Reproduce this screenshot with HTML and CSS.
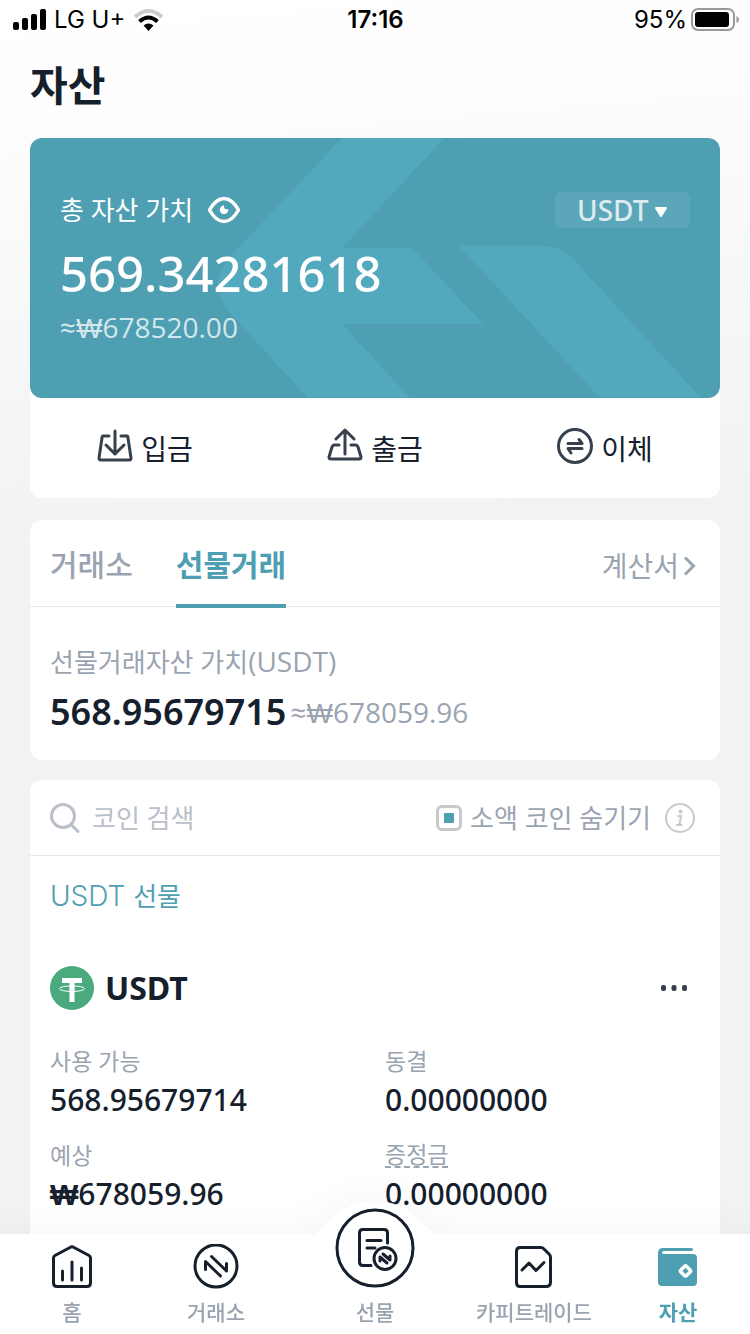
FILE: index.html
```html
<!DOCTYPE html>
<html lang="ko">
<head>
<meta charset="utf-8">
<meta name="viewport" content="width=device-width, initial-scale=1">
<title>자산</title>
<link rel="stylesheet" href="styles.css">
</head>
<body>
<div class="app">
  <div class="status">
    <div class="status-side">
      <svg width="34" height="22" viewBox="0 0 34 22" aria-hidden="true"><rect x="1" y="13" width="6" height="8" rx="2"/><rect x="10" y="9" width="6" height="12" rx="2"/><rect x="19" y="5" width="6" height="16" rx="2"/><rect x="28" y="0" width="6" height="21" rx="2"/></svg>
      <span class="carrier">LG U+</span>
      <svg width="30" height="22" viewBox="0 0 30 22" fill="none" aria-hidden="true"><path d="M2 8Q15.500-4 29 8" stroke="#ccc" stroke-width="4"/><path d="M6.500 12.500Q15.500 4.500 24.500 12.500" stroke="#000" stroke-width="4"/><path d="M10.500 16.500Q15.500 12.500 20.500 16.500L15.500 22Z" fill="#000"/></svg>
    </div>
    <span class="clock">17:16</span>
    <div class="status-side status-right">
      <span>95%</span>
      <svg width="48" height="24" viewBox="0 0 48 24" aria-hidden="true"><rect x="1" y="1" width="42" height="21" rx="6" fill="none" stroke="#999" stroke-width="2"/><rect x="4" y="4" width="34" height="15" rx="3"/><path d="M45.500 8Q48 9 48 11.500T45.500 15Z" fill="#999"/></svg>
    </div>
  </div>

  <main class="main">
    <h1 class="title">자산</h1>

    <section class="panel">
      <div class="hero">
        <svg class="hero-art" viewBox="0 0 690 260" preserveAspectRatio="xMidYMid slice" fill="#52a9bd" aria-hidden="true"><path d="M312 0H414L312 110H382L453 186H312L380 260H278L200 175Q176 146 200 119Z"/><path d="M429 108H515Q530 108 542 120L671 260H570Z"/></svg>
        <div class="hero-top">
          <button class="reveal" type="button">총 자산 가치
            <svg width="34" height="28" viewBox="0 0 34 28" aria-hidden="true"><path d="M2.500 14Q9 2.500 17 2.500T31.500 14Q25 25.500 17 25.500T2.500 14Z" fill="none" stroke="#fff" stroke-width="3.500" stroke-linejoin="round"/><path d="M17 9.500A4.300 4.300 0 1 0 21.300 13Q17 14.500 17 9.500Z" fill="#fff"/></svg>
          </button>
          <div class="currency">
            <select class="currency-select" aria-label="통화"><option>USDT</option></select>
            <svg class="currency-arrow" width="14" height="11" viewBox="0 0 14 11" aria-hidden="true"><path d="M2 1H12L7 9Z" fill="#fff" stroke="#fff" stroke-width="2" stroke-linejoin="round"/></svg>
          </div>
        </div>
        <div class="hero-total">569.34281618</div>
        <div class="hero-krw">≈<span class="won">₩</span>678520.00</div>
      </div>
      <div class="actions">
        <button class="action" type="button"><svg width="36" height="36" viewBox="0 0 36 36" aria-hidden="true"><path d="M12 8H6Q5 8 5 10L2 30Q2 32 4 32H32Q34 32 34 30L31 10Q31 8 30 8H24M18 3V26M9 17L18 26L27 17"/></svg>입금</button>
        <button class="action" type="button"><svg width="36" height="36" viewBox="0 0 36 36" aria-hidden="true"><path d="M12 17H7Q6 17 5 19L2 29Q2 31 4 31H32Q34 31 34 29L31 19Q30 17 29 17H24M18 26V2M9 11L18 2L27 11"/></svg>출금</button>
        <button class="action" type="button"><svg width="36" height="36" viewBox="0 0 36 36" aria-hidden="true"><circle cx="18" cy="18" r="16.500"/><path d="M11 15.500H25L22 11.500M25 20.500H11L14 25"/></svg>이체</button>
      </div>
    </section>

    <section class="panel">
      <div class="tabs">
        <button class="tab" type="button">거래소</button>
        <button class="tab tab-active" type="button">선물거래</button>
        <a class="bill" href="#">계산서<svg width="13" height="22" viewBox="0 0 13 22" aria-hidden="true"><path d="M2 2.500L10.500 11L2 19.500" fill="none" stroke="currentColor" stroke-width="3"/></svg></a>
      </div>
      <div class="summary">
        <div class="summary-label">선물거래자산 가치<span class="latin">(USDT)</span></div>
        <div class="summary-row"><strong class="summary-value">568.95679715</strong><span class="latin">≈<span class="won">₩</span>678059.96</span></div>
      </div>
    </section>

    <section class="panel">
      <div class="filter">
        <label class="search">
          <svg width="30" height="32" viewBox="0 0 30 32" fill="none" stroke="#b9c0ca" stroke-width="3" aria-hidden="true"><circle cx="13" cy="14" r="11.500"/><path d="M21 22.500L28 29.500" stroke-linecap="round"/></svg>
          <input class="search-input" type="search" placeholder="코인 검색" aria-label="코인 검색">
        </label>
        <label class="hide-small"><input class="check" type="checkbox" checked>소액 코인 숨기기</label>
        <button class="info" type="button" aria-label="안내"><svg width="30" height="30" viewBox="0 0 30 30" fill="none" stroke="#c8c9ce" stroke-width="2" aria-hidden="true"><circle cx="15" cy="15" r="14"/><circle cx="15.500" cy="8.500" r="2" fill="#c8c9ce" stroke="none"/><path d="M12.500 13H16L14.500 21.500M11 22H17.500"/></svg></button>
      </div>
      <div class="coin">
        <h2 class="coin-group"><span class="coin-group-code">USDT </span>선물</h2>
        <div class="coin-head">
          <svg width="44" height="44" viewBox="0 0 44 44" aria-hidden="true"><circle cx="22" cy="22" r="22" fill="#4ba97e"/><path d="M12 12H32V17H24.500V36H19.500V17H12Z" fill="#fff"/><ellipse cx="22" cy="22.700" rx="12.500" ry="2.800" fill="none" stroke="#fff"/><path d="M19.500 21.500H24.500V24.500H19.500Z" fill="#fff"/></svg>
          <span class="coin-name">USDT</span>
          <button class="more" type="button" aria-label="더 보기"><svg width="26" height="6" viewBox="0 0 26 6" fill="#36414d" aria-hidden="true"><rect x="0" width="5" height="6" rx="2"/><rect x="10.500" width="5" height="6" rx="2"/><rect x="21" width="5" height="6" rx="2"/></svg></button>
        </div>
        <dl class="stats">
          <div><dt class="stat-label">사용 가능</dt><dd class="stat-value">568.95679714</dd></div>
          <div><dt class="stat-label">동결</dt><dd class="stat-value">0.00000000</dd></div>
          <div><dt class="stat-label">예상</dt><dd class="stat-value"><span class="won won-strong">₩</span>678059.96</dd></div>
          <div><dt class="stat-label"><span class="hint">증정금</span></dt><dd class="stat-value">0.00000000</dd></div>
        </dl>
      </div>
    </section>
  </main>

  <nav class="nav">
    <svg class="nav-bump" width="122" height="34" viewBox="0 0 122 34" aria-hidden="true"><path d="M0 33C14 26 24 0 61 0S108 26 122 33V34H0Z" fill="#fff"/></svg>
    <a class="nav-item" href="#"><svg class="nav-icon" width="46" height="46" viewBox="0 0 46 46" aria-hidden="true"><path d="M4.500 14Q4.500 12.500 6 11.500L21 3.500Q23 2 25 3.500L40 11.500Q41.500 12.500 41.500 14V39Q41.500 42.500 38 42.500H8Q4.500 42.500 4.500 39Z"/><path d="M13.500 27V36M23 18V36M32.500 24V36"/></svg>홈</a>
    <a class="nav-item" href="#"><svg class="nav-icon" width="46" height="46" viewBox="0 0 46 46" aria-hidden="true"><circle cx="23" cy="22" r="21"/><path d="M18.500 12.500L33.500 27V19.500M27.500 32L12.500 17.500V25.500"/></svg>거래소</a>
    <a class="nav-item" href="#"><svg class="nav-main" width="80" height="80" viewBox="0 0 80 80" aria-hidden="true"><circle cx="40" cy="40" r="38"/><path d="M36 57.500H28Q24.500 57.500 24.500 54V25Q24.500 21.500 28 21.500H49Q52.500 21.500 52.500 25V35"/><path d="M32 32.500H46M32 40H40"/><circle cx="50" cy="50.500" r="11"/><path d="M48 46L55 52V48M52 55L45 49V53"/></svg>선물</a>
    <a class="nav-item" href="#"><svg class="nav-icon" width="46" height="46" viewBox="0 0 46 46" aria-hidden="true"><path d="M9 3.500H30Q31.500 3.500 33 5L38 10Q39.500 11.500 39.500 13V38Q39.500 42.500 35 42.500H9Q5.500 42.500 5.500 38.500V7.500Q5.500 3.500 9 3.500Z"/><path d="M11 26L18 19L25 26.500L33 18.500"/></svg>카피트레이드</a>
    <a class="nav-item nav-active" href="#"><svg width="46" height="46" viewBox="0 0 46 46" aria-hidden="true"><path d="M8 4H36.500Q38 4 38 5.500T36.500 7H9Q7 7 7 8.500T9 10H38Q42 10 42 14V38Q42 42 38 42H7Q3 42 3 38V9Q3 4 8 4Z" fill="#4f9fb3"/><rect x="-4" y="-4" width="8" height="8" rx="1.500" transform="translate(30.500 27) rotate(45)" fill="none" stroke="#fff" stroke-width="3.500"/></svg>자산</a>
  </nav>
</div>
</body>
</html>
```
FILE: styles.css
```css
* { box-sizing: border-box; }

body {
  margin: 0;
  font-family: "Noto Sans", "Noto Sans CJK KR", sans-serif;
  font-size: 26px;
  line-height: 36px;
  color: #15202c;
}

button, input, select {
  margin: 0;
  padding: 0;
  border: 0;
  background: none;
  color: inherit;
  font: inherit;
}

a { color: inherit; text-decoration: none; }
svg { display: block; flex: none; }

.app {
  display: flex;
  flex-direction: column;
  height: 100vh;
  background: linear-gradient(175deg, #fff 0, #fdfdfd 130px, #f3f4f6 470px, #f0f2f4 600px);
}

/* Status bar */
.status {
  display: grid;
  grid-template-columns: 1fr auto 1fr;
  align-items: center;
  height: 40px;
  padding: 0 11px 0 12px;
  font-family: Inter, sans-serif;
  font-size: 24px;
  line-height: 38px;
  color: #000;
}
.status-side { display: flex; align-items: center; gap: 8px; }
.status-right { justify-content: flex-end; gap: 4px; }
.clock { font-weight: 600; }

.main {
  flex: 1;
  min-height: 0;
  padding: 0 30px;
  overflow-y: auto;
  scrollbar-width: none;
}

.title {
  margin: 0;
  padding: 15px 0 23px;
  font-size: 41px;
  line-height: 60px;
  font-weight: 700;
}

.panel {
  margin-bottom: 20px;
  border-radius: 12px;
  background: #fff;
}

.won { font-family: "Liberation Sans", sans-serif; line-height: 1; }
.won-strong { font-weight: 700; }

/* Total assets */
.hero {
  position: relative;
  padding: 54px 30px 53px;
  border-radius: 12px;
  overflow: hidden;
  background: #4f9fb3;
  color: #fff;
}
.hero-art { position: absolute; inset: 0; width: 100%; height: 100%; }
.hero-top {
  position: relative;
  display: flex;
  justify-content: space-between;
  align-items: center;
}
.reveal { display: flex; align-items: center; gap: 14px; }
.currency { position: relative; }
.currency-select {
  appearance: none;
  display: block;
  width: 135px;
  height: 36px;
  padding-left: 22px;
  border-radius: 6px;
  background: rgba(255, 255, 255, 0.08);
  color: rgba(255, 255, 255, 0.8);
  font-size: 28px;
  font-weight: 500;
}
.currency-arrow { position: absolute; right: 22px; top: 15px; pointer-events: none; }
.hero-total {
  position: relative;
  margin-top: 10px;
  font-size: 49px;
  line-height: 70px;
  font-weight: 500;
}
.hero-krw {
  position: relative;
  height: 36px;
  margin-top: 1px;
  font-family: "Open Sans", "Noto Sans", sans-serif;
  font-size: 28px;
  color: rgba(255, 255, 255, 0.75);
}

.actions { display: grid; grid-template-columns: repeat(3, 1fr); padding: 30px 0 28px; margin-bottom: 22px; }
.action {
  display: flex;
  justify-content: center;
  align-items: flex-start;
  gap: 8px;
  font-size: 28px;
  line-height: 42px;
}
.action svg {
  fill: none;
  stroke: #36414d;
  stroke-width: 3;
  stroke-linecap: round;
  stroke-linejoin: round;
}

/* Account tabs */
.tabs {
  display: flex;
  align-items: stretch;
  gap: 43px;
  height: 87px;
  padding: 0 24px 0 20px;
  border-bottom: 1px solid #e6e8ea;
  color: #9aa4b1;
}
.tab {
  margin-bottom: -2px;
  padding-top: 6px;
  border-bottom: 4px solid transparent;
  font-size: 30px;
  font-weight: 500;
}
.tab-active { border-color: #4f9fb3; color: #4f9fb3; font-weight: 700; }
.bill { display: flex; align-items: center; gap: 4px; margin-left: auto; padding-top: 6px; font-size: 28px; }

.summary { padding: 36px 20px 23px; color: #9aa4b1; }
.summary-label { display: flex; align-items: baseline; height: 36px; }
.latin { font-family: "Open Sans", "Noto Sans", sans-serif; font-size: 28px; }
.summary-row { display: flex; align-items: center; gap: 4px; height: 50px; margin-top: 8px; }
.summary-value { font-size: 36px; font-weight: 600; color: #15202c; }

/* Coin list */
.filter {
  display: flex;
  align-items: center;
  height: 76px;
  padding: 0 25px 0 20px;
  border-bottom: 1px solid #e6e8ea;
  color: #9aa4b1;
}
.search { display: flex; flex: 1; align-items: center; gap: 12px; min-width: 0; }
.search-input { width: 100%; min-width: 0; outline: 0; }
.search-input::placeholder { color: #b9c0ca; opacity: 1; }
.hide-small { display: flex; align-items: center; gap: 8px; white-space: nowrap; }
.check {
  appearance: none;
  display: grid;
  place-items: center;
  width: 26px;
  height: 26px;
  border: 3px solid #c8c9ce;
  border-radius: 6px;
}
.check:checked::before { content: ""; width: 10px; height: 10px; border-radius: 1px; background: #4f9fb3; }
.info { margin-left: 14px; }

.coin { padding: 22px 20px 40px; }
.coin-group { height: 36px; margin: 0; font-size: 26px; font-weight: 400; color: #4f9fb3; }
.coin-group-code { font-family: Inter, sans-serif; font-size: 28px; font-weight: 300; }
.coin-head { display: flex; align-items: center; gap: 11px; margin-top: 52px; }
.coin-name { font-size: 32px; font-weight: 700; }
.more { margin-left: auto; padding: 12px 13px; }
.stats {
  display: grid;
  grid-template-columns: 1fr 1fr;
  gap: 20px;
  margin: 36px 0 0;
}
.stat-label {
  display: flex;
  align-items: center;
  height: 30px;
  font-size: 23px;
  line-height: 30px;
  color: #9aa4b1;
}
.hint { line-height: 24px; border-bottom: 2px dashed #9aa4b1; }
.stat-value { margin: 4px 0 0; font-size: 30px; line-height: 40px; font-weight: 500; }

/* Bottom navigation */
.nav {
  position: relative;
  display: grid;
  grid-template-columns: 24fr 24fr 29fr 24fr 24fr;
  background: #fff;
  filter: drop-shadow(0 -4px 16px rgba(0, 0, 0, 0.04));
}
.nav-bump { position: absolute; bottom: 100%; left: 50%; transform: translateX(-50%); margin-bottom: -1px; }
.nav-item {
  position: relative;
  display: flex;
  flex-direction: column;
  align-items: center;
  justify-content: flex-end;
  gap: 8px;
  height: 100px;
  padding-bottom: 8px;
  font-size: 21px;
  line-height: 28px;
  font-weight: 500;
  color: #9aa4b1;
  white-space: nowrap;
}
.nav-active { color: #4f9fb3; font-weight: 700; }
.nav-main { margin-bottom: 2px; }
.nav-icon, .nav-main {
  fill: none;
  stroke: #15202c;
  stroke-width: 3;
  stroke-linecap: round;
  stroke-linejoin: round;
}
```
